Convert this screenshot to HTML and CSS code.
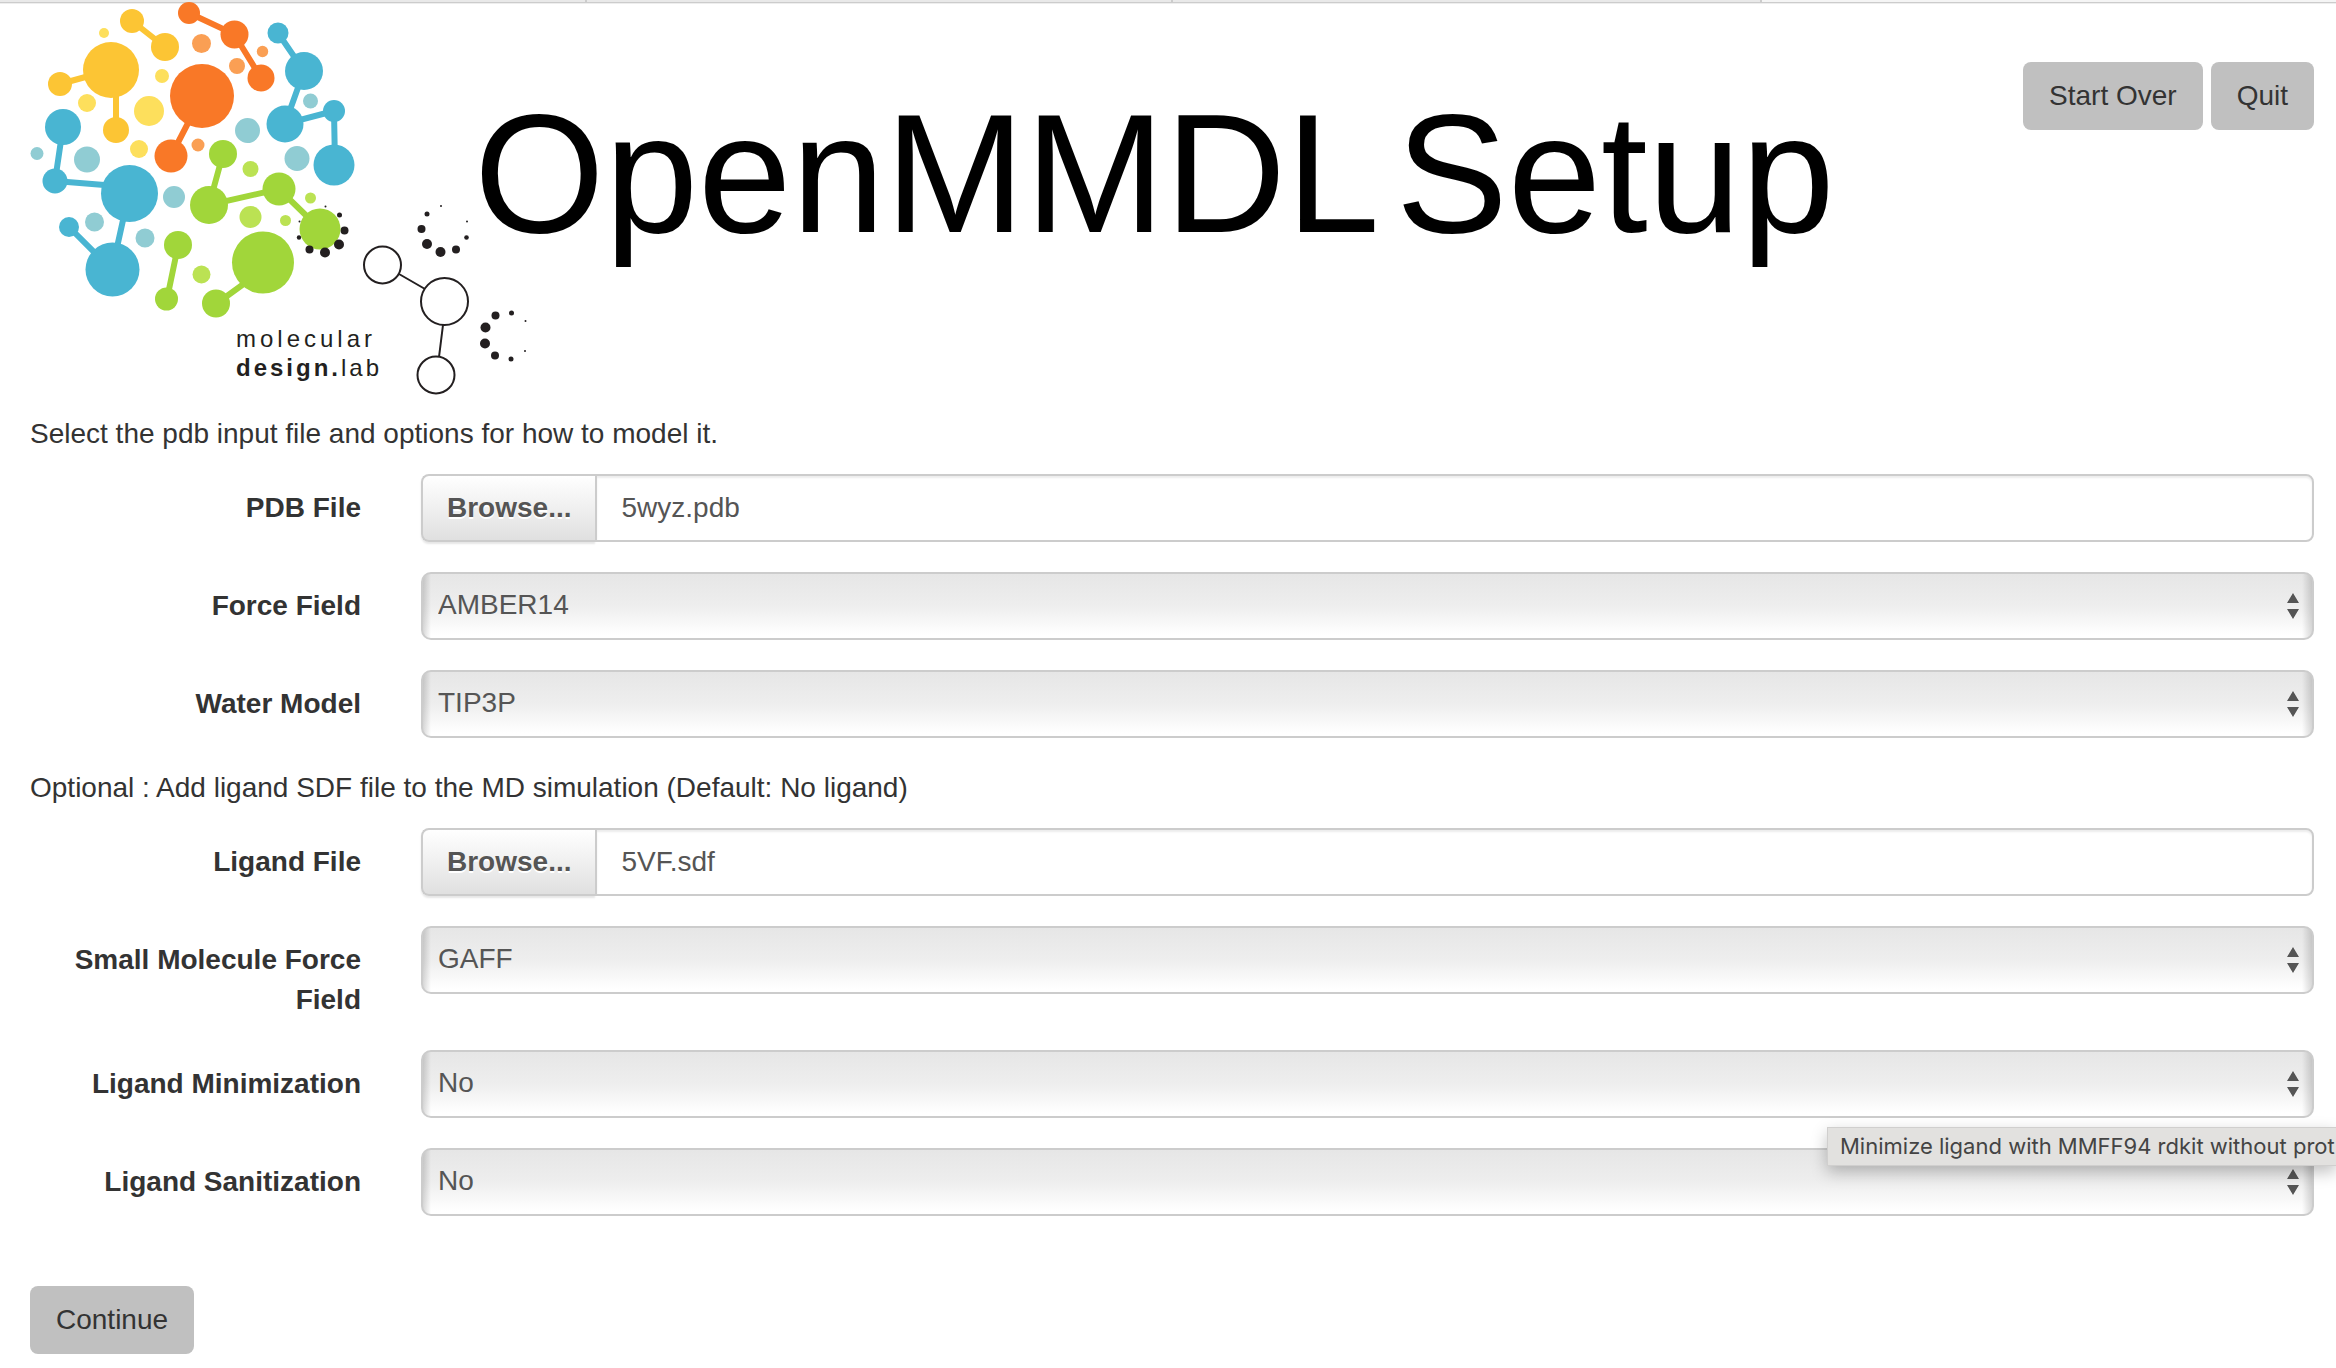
FILE: index.html
```html
<!DOCTYPE html>
<html lang="en">
<head>
<meta charset="utf-8">
<title>OpenMMDL Setup</title>
<link rel="stylesheet" href="styles.css">
</head>
<body>
<div class="tab-edge"><span></span><span></span><span></span><span class="active"></span></div>
<header class="header">
  <svg class="logo" width="474" height="396" viewBox="0 0 474 396" role="img" aria-label="molecular design.lab">
    <g fill="#fcc534" stroke="#fcc534">
      <path class="bond" d="M132 21L165 47M60 84L111 70M116 80V130"/>
      <circle cx="132" cy="21" r="12"/><circle cx="165" cy="47" r="14"/><circle cx="111" cy="70" r="28"/><circle cx="60" cy="84" r="12"/><circle cx="116" cy="130" r="13"/>
    </g>
    <g fill="#fddf5c">
      <circle cx="104" cy="33" r="5"/><circle cx="162" cy="76" r="7"/><circle cx="87" cy="103" r="9"/><circle cx="149" cy="111" r="15"/><circle cx="139" cy="149" r="9"/>
    </g>
    <g fill="#f97827" stroke="#f97827">
      <path class="bond" d="M189 13L234 34L261 78M202 96L171 156"/>
      <circle cx="189" cy="13" r="11"/><circle cx="234.500" cy="34.500" r="14"/><circle cx="261" cy="78" r="13.500"/><circle cx="202" cy="96" r="32"/><circle cx="171" cy="156" r="16.500"/>
    </g>
    <g fill="#fa9f54">
      <circle cx="201.500" cy="43.500" r="9.500"/><circle cx="237" cy="66" r="8"/><circle cx="262.500" cy="51.500" r="5.700"/><circle cx="198" cy="145" r="6.500"/>
    </g>
    <g fill="#49b5d2" stroke="#49b5d2">
      <path class="bond" d="M278 33L304 71L285 124L334 111L335 165M63 127L55 181L129 187M129 193L112 270L69 227"/>
      <circle cx="278" cy="33" r="10.500"/><circle cx="304" cy="71" r="19"/><circle cx="285" cy="124" r="18.500"/><circle cx="334" cy="111" r="11"/><circle cx="334" cy="165" r="20.500"/>
      <circle cx="63" cy="127" r="18"/><circle cx="55" cy="181" r="12.500"/><circle cx="129.500" cy="193.500" r="28.500"/><circle cx="112.500" cy="269.500" r="27"/><circle cx="69" cy="227" r="10"/>
    </g>
    <g fill="#90ccd3">
      <circle cx="310.500" cy="101" r="7.500"/><circle cx="247.500" cy="130.500" r="12.500"/><circle cx="297" cy="158.500" r="12.500"/><circle cx="37" cy="153.500" r="6.500"/><circle cx="87" cy="159.500" r="13"/><circle cx="174" cy="197" r="11"/><circle cx="94.500" cy="222" r="9.500"/><circle cx="145" cy="238" r="9.500"/>
    </g>
    <g fill="#231f20">
      <circle cx="325.500" cy="206.500" r="1"/><circle cx="339.500" cy="215" r="2.500"/><circle cx="344.500" cy="230.500" r="4"/><circle cx="299.500" cy="221.500" r="1"/><circle cx="299" cy="237.500" r="2.200"/>
    </g>
    <g fill="#a1d63a" stroke="#a1d63a">
      <path class="bond" d="M223 154L209 205L279 189L320 229M178 246L167 299M263 270L216 304"/>
      <circle cx="223" cy="154" r="14"/><circle cx="209" cy="205" r="19"/><circle cx="279" cy="189" r="16.500"/><circle cx="320" cy="229" r="20.500"/><circle cx="178" cy="245" r="14"/><circle cx="166.500" cy="299" r="11.500"/><circle cx="263" cy="262.500" r="31"/><circle cx="216" cy="303.500" r="14"/>
    </g>
    <g fill="#bbe253">
      <circle cx="250.500" cy="169" r="8"/><circle cx="310.500" cy="198" r="5.500"/><circle cx="250.500" cy="217" r="11"/><circle cx="285.500" cy="220.500" r="5.500"/><circle cx="201.500" cy="274.500" r="9"/>
    </g>
    <g fill="#231f20">
      <circle cx="339" cy="244.500" r="5"/><circle cx="325" cy="252.500" r="5"/><circle cx="309.500" cy="249.500" r="4"/>
      <circle cx="441" cy="206" r="1"/><circle cx="427" cy="214" r="2.500"/><circle cx="421.500" cy="229" r="4"/><circle cx="427" cy="244" r="5"/><circle cx="440.500" cy="252" r="5"/><circle cx="456" cy="249.500" r="4"/><circle cx="466.500" cy="237.500" r="2.300"/><circle cx="467" cy="221.500" r="1"/>
      <circle cx="525.500" cy="321" r="1"/><circle cx="511.500" cy="313" r="2.500"/><circle cx="495.500" cy="315.500" r="4"/><circle cx="485.500" cy="327.500" r="5"/><circle cx="485" cy="343.500" r="5"/><circle cx="495" cy="355.500" r="4"/><circle cx="511" cy="359" r="2.500"/><circle cx="525" cy="351" r="1"/>
    </g>
    <g fill="#fff" stroke="#231f20" stroke-width="2">
      <path d="M399 274L425 289M443 325L439 357"/>
      <circle cx="382.500" cy="265" r="18.500"/><circle cx="444.500" cy="301.500" r="23.500"/><circle cx="436" cy="375" r="18.500"/>
    </g>
    <text class="lab-name" x="236" y="347">molecular</text>
    <text class="lab-type" x="236" y="376"><tspan class="lab-strong">design.</tspan>lab</text>
  </svg>
  <h1 class="title"><span>OpenMMDL</span><span>Setup</span></h1>
  <div class="actions">
    <button class="btn" type="button">Start Over</button>
    <button class="btn" type="button">Quit</button>
  </div>
</header>

<form class="setup">
  <p class="intro">Select the pdb input file and options for how to model it.</p>
  <div class="row">
    <label class="label" for="pdb">PDB File</label>
    <div class="file"><button class="browse" type="button">Browse...</button><input class="file-name" id="pdb" type="text" value="5wyz.pdb" readonly></div>
  </div>
  <div class="row">
    <label class="label" for="ff">Force Field</label>
    <select class="select" id="ff"><option>AMBER14</option></select>
  </div>
  <div class="row">
    <label class="label" for="water">Water Model</label>
    <select class="select" id="water"><option>TIP3P</option></select>
  </div>
  <p class="intro">Optional : Add ligand SDF file to the MD simulation (Default: No ligand)</p>
  <div class="row">
    <label class="label" for="ligand">Ligand File</label>
    <div class="file"><button class="browse" type="button">Browse...</button><input class="file-name" id="ligand" type="text" value="5VF.sdf" readonly></div>
  </div>
  <div class="row">
    <label class="label" for="smallff">Small Molecule Force Field</label>
    <select class="select" id="smallff"><option>GAFF</option></select>
  </div>
  <div class="row hinted">
    <label class="label" for="minimize">Ligand Minimization</label>
    <select class="select" id="minimize"><option>No</option></select>
    <div class="tooltip" role="tooltip">Minimize ligand with MMFF94 rdkit without prot</div>
  </div>
  <div class="row">
    <label class="label" for="sanitize">Ligand Sanitization</label>
    <select class="select" id="sanitize"><option>No</option></select>
  </div>
  <div class="submit"><button class="btn" type="submit">Continue</button></div>
</form>
</body>
</html>
```
FILE: styles.css
```css
* {
  box-sizing: border-box;
}

body {
  margin: 0;
  background: #fff;
  color: #333;
  font: 28px/40px "Liberation Sans", Arial, sans-serif;
}

button,
input,
select {
  margin: 0;
  font: inherit;
  color: inherit;
}

.tab-edge {
  display: grid;
  grid-template-columns: 587fr 586fr 589fr 574fr;
  height: 4px;
  border-bottom: 1px solid #eee;
}

.tab-edge span {
  background: #e9e9e9;
  border-right: 2px solid #ccc;
  border-bottom: 1px solid #ccc;
}

.tab-edge .active {
  background: #f5f5f5;
  border-right: 0;
}

.header {
  display: flex;
  align-items: flex-start;
  height: 410px;
  padding-right: 22px;
}

.logo {
  flex: none;
  overflow: visible;
  margin-top: -4px;
}

.bond {
  fill: none;
  stroke-width: 6px;
}

.logo circle {
  stroke-width: 0;
}

.logo g[stroke-width] circle {
  stroke-width: 2px;
}

.lab-name,
.lab-type {
  fill: #231f20;
  font-size: 24px;
  letter-spacing: 4px;
}

.lab-type {
  letter-spacing: 3px;
}

.lab-strong {
  font-weight: bold;
}

.title {
  display: flex;
  gap: 16px;
  margin: 86px 0 0;
  color: #000;
  font-size: 168px;
  font-weight: normal;
  line-height: 168px;
}

.actions {
  display: flex;
  gap: 8px;
  margin: 58px 0 0 auto;
}

.btn {
  height: 68px;
  padding: 0 26px;
  border: 0;
  border-radius: 8px;
  background: #c0c0c0;
  white-space: nowrap;
}

.setup {
  padding: 0 22px 14px 30px;
}

.intro {
  margin: 0 0 20px;
}

.row {
  display: grid;
  grid-template-columns: 331px minmax(0, 1fr);
  column-gap: 60px;
  align-items: start;
  margin-bottom: 30px;
}

.label {
  padding-top: 14px;
  font-weight: bold;
  text-align: right;
}

.file {
  display: flex;
  height: 68px;
}

.browse {
  padding: 0 24px;
  border: 2px solid #ccc;
  border-right: 0;
  border-radius: 8px 0 0 8px;
  background: linear-gradient(#fff, #e0e0e0);
  box-shadow: 0 2px 2px rgba(0, 0, 0, 0.1);
  color: #555;
  font-weight: bold;
  text-shadow: 0 2px 0 #fff;
}

.file-name {
  flex: 1;
  min-width: 0;
  padding: 0 24px;
  border: 2px solid #ccc;
  border-radius: 0 8px 8px 0;
  background: #fff;
  box-shadow: inset 0 2px 2px rgba(0, 0, 0, 0.075);
  color: #555;
}

.select {
  width: 100%;
  height: 68px;
  padding: 0 44px 2px 15px;
  border: 2px solid #ccc;
  border-radius: 10px;
  appearance: none;
  background:
    url("data:image/svg+xml,%3Csvg xmlns='http://www.w3.org/2000/svg' width='12' height='26'%3E%3Cpath d='M6 0L12 10H0ZM0 16H12L6 26Z' fill='%23555'/%3E%3C/svg%3E") right 13px center no-repeat,
    linear-gradient(to right, rgba(0, 0, 0, 0.15), transparent) left / 8px 100% no-repeat,
    linear-gradient(to left, rgba(0, 0, 0, 0.15), transparent) right / 10px 100% no-repeat,
    linear-gradient(#e6e6e6, #eee 50%, #fff 95%);
  color: #555;
}

.hinted {
  position: relative;
}

.tooltip {
  position: absolute;
  top: 77px;
  right: -22px;
  width: 509px;
  height: 39px;
  padding-left: 12px;
  border: 1px solid #d0cfce;
  border-right: 0;
  background: #e2e1df;
  box-shadow: 0 6px 16px rgba(0, 0, 0, 0.25);
  color: #444;
  font: 22px/37px Inter, sans-serif;
  white-space: nowrap;
}

.submit {
  padding-top: 40px;
}
```
